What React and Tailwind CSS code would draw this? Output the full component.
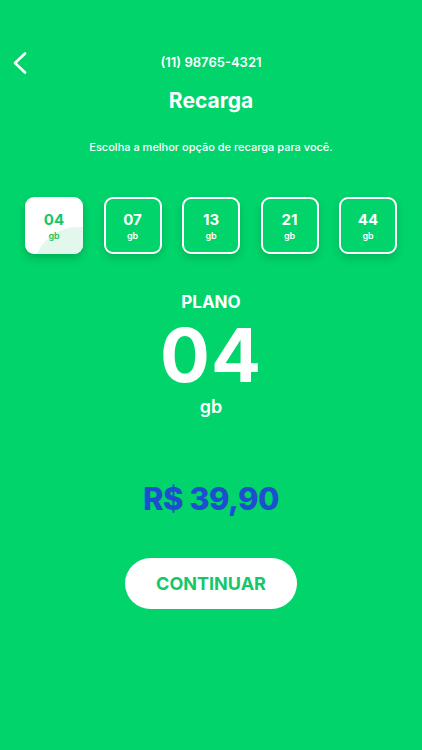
const plans = ['04', '07', '13', '21', '44'];

function PlanBox({ value, active }) {
  if (active) {
    return (
      <div className="relative w-[58px] h-[57px] rounded-[9px] bg-white overflow-hidden flex flex-col items-center justify-center shadow-[0_4px_8px_rgba(0,0,0,0.18)]">
        <div className="absolute left-[8px] top-[30px] w-[110px] h-[90px] rounded-full bg-[#e4f7ec]" />
        <span className="relative text-[15px] font-bold leading-none text-[#16c767]">{value}</span>
        <span className="relative mt-[4px] text-[9px] font-semibold leading-none text-[#16c767]">gb</span>
      </div>
    );
  }
  return (
    <div className="w-[58px] h-[57px] rounded-[9px] border-2 border-white flex flex-col items-center justify-center shadow-[0_4px_8px_rgba(0,0,0,0.15)]">
      <span className="text-[15px] font-bold leading-none text-white">{value}</span>
      <span className="mt-[4px] text-[9px] font-semibold leading-none text-white">gb</span>
    </div>
  );
}

export default function App() {
  return (
    <div className="w-[422px] h-[750px] bg-[#00d46a] text-white flex flex-col items-center font-['Inter',sans-serif]">
      <div className="relative w-full h-[32px] mt-[47px] flex items-center justify-center">
        <svg className="absolute left-[13px] top-[5px]" width="14" height="22" viewBox="0 0 14 22" fill="none">
          <polyline points="12,1.5 2,11 12,20.5" stroke="white" strokeWidth="2.6" strokeLinecap="round" strokeLinejoin="round" />
        </svg>
        <span className="text-[13px] font-semibold">(11) 98765-4321</span>
      </div>
      <h1 className="mt-[6px] text-[21px] font-bold">Recarga</h1>
      <p className="mt-[22px] text-[11px] font-medium">Escolha a melhor opção de recarga para você.</p>
      <div className="mt-[42px] w-full px-[25px] flex justify-between">
        {plans.map((p, i) => (
          <PlanBox key={p} value={p} active={i === 0} />
        ))}
      </div>
      <div className="mt-[38px] text-[17px] font-bold leading-[20px]">PLANO</div>
      <div className="mt-[2px] text-[74px] font-bold leading-[82px] tracking-[1px]">04</div>
      <div className="mt-0 text-[18px] font-semibold leading-[22px]">gb</div>
      <div className="mt-[65px] text-[31px] font-extrabold leading-none text-[#1b4fcf] tracking-[-0.5px]">R$ 39,90</div>
      <button className="mt-[44px] w-[172px] h-[51px] rounded-full bg-white text-[#16c767] text-[18px] font-bold">
        CONTINUAR
      </button>
    </div>
  );
}
